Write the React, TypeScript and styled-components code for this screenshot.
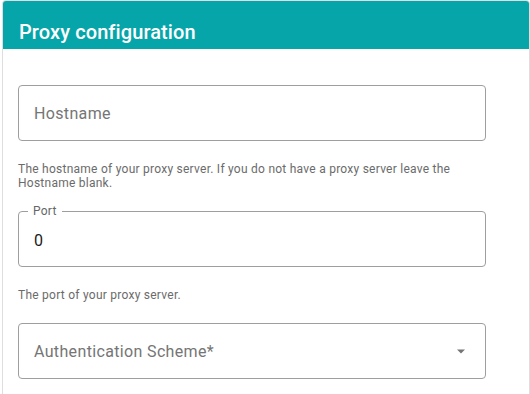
import React from 'react';
import styled, { createGlobalStyle } from 'styled-components';

const GlobalStyle = createGlobalStyle`
  body {
    margin: 0;
    background: #ffffff;
    font-family: Roboto, 'Noto Sans', sans-serif;
  }
`;

const Card = styled.section`
  margin-left: 2px;
  width: 528px;
  height: 394px;
  box-sizing: border-box;
  border: 1px solid #dedede;
  border-bottom: none;
  border-radius: 4px 4px 0 0;
  overflow: hidden;
  background: #ffffff;
`;

const Header = styled.header`
  height: 48px;
  background-color: #06a5a9;
  display: flex;
  align-items: flex-end;
  padding: 0 0 5px 16px;
  box-sizing: border-box;
`;

const Title = styled.h2`
  margin: 0;
  color: #ffffff;
  font-size: 20px;
  font-weight: 500;
  line-height: 24px;
  letter-spacing: 0.1px;
`;

const Body = styled.div`
  padding: 36px 0 0 15px;
  width: 468px;
  display: flex;
  flex-direction: column;
`;

const Field = styled.div<{ $gap?: number }>`
  position: relative;
  height: 56px;
  box-sizing: border-box;
  border: 1px solid #9e9e9e;
  border-radius: 4px;
  display: flex;
  align-items: center;
  padding: 0 15px;
  margin-top: ${(p) => p.$gap ?? 0}px;
`;

const Placeholder = styled.span`
  font-size: 16px;
  color: #757575;
  letter-spacing: 0.35px;
`;

const Value = styled.span`
  font-size: 16px;
  color: #1a1a1a;
  padding-top: 2px;
`;

const FloatingLabel = styled.span`
  position: absolute;
  top: -8px;
  left: 9px;
  padding: 0 5px;
  background: #ffffff;
  font-size: 12px;
  line-height: 14px;
  color: #666666;
  letter-spacing: 0.25px;
`;

const Helper = styled.p`
  margin: 21px 0 0;
  font-size: 12px;
  line-height: 14px;
  color: #6b6b6b;
  letter-spacing: 0.25px;
  max-width: 450px;
`;

const Arrow = styled.svg`
  position: absolute;
  right: 12px;
  top: 50%;
  transform: translateY(-50%);
  width: 24px;
  height: 24px;
  fill: #757575;
`;

const App = () => {
  return (
    <>
      <GlobalStyle />
      <Card>
        <Header>
          <Title>Proxy configuration</Title>
        </Header>
        <Body>
          <Field>
            <Placeholder>Hostname</Placeholder>
          </Field>
          <Helper>
            The hostname of your proxy server. If you do not have a proxy server leave the Hostname blank.
          </Helper>
          <Field $gap={21}>
            <FloatingLabel>Port</FloatingLabel>
            <Value>0</Value>
          </Field>
          <Helper>The port of your proxy server.</Helper>
          <Field $gap={21}>
            <Placeholder>Authentication Scheme*</Placeholder>
            <Arrow viewBox="0 0 24 24">
              <path d="M8 10.5l4 4 4-4z" />
            </Arrow>
          </Field>
        </Body>
      </Card>
    </>
  );
};

export default App;
